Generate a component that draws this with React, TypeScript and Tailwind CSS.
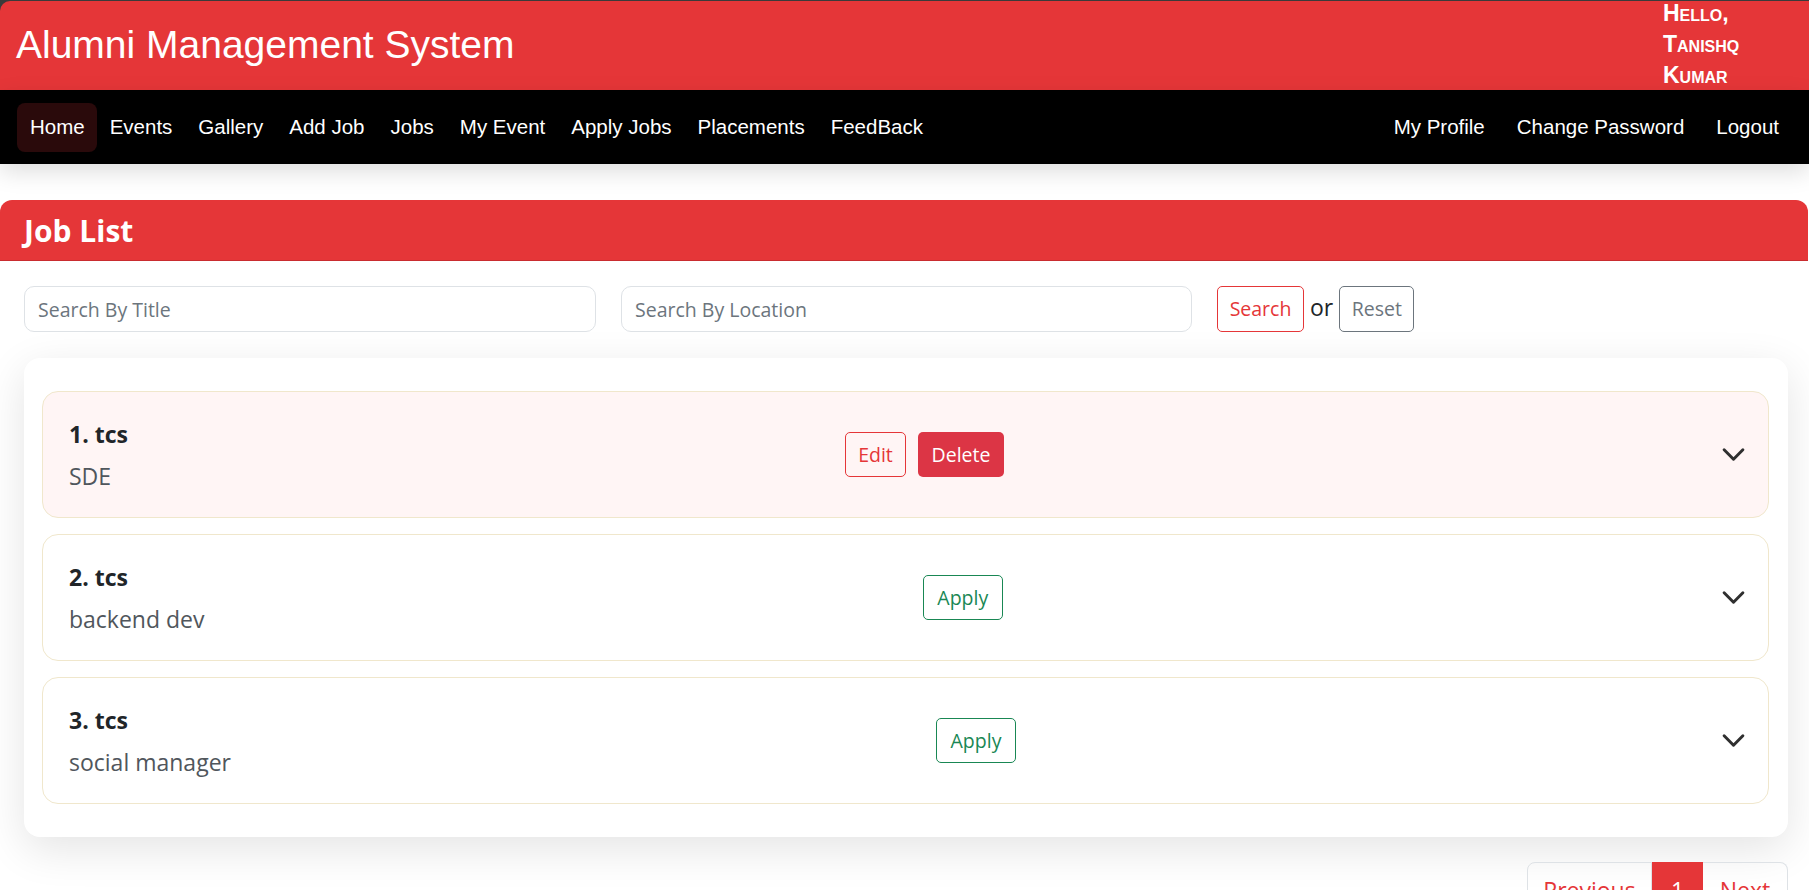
const jobs = [
  { id: 1, company: 'tcs', title: 'SDE', own: true },
  { id: 2, company: 'tcs', title: 'backend dev', own: false },
  { id: 3, company: 'tcs', title: 'social manager', own: false },
]

const leftLinks = ['Events', 'Gallery', 'Add Job', 'Jobs', 'My Event', 'Apply Jobs', 'Placements', 'FeedBack']
const rightLinks = ['My Profile', 'Change Password', 'Logout']

function Chevron() {
  return (
    <svg width="25" height="25" viewBox="0 0 16 16" fill="none" stroke="#2f2f2f" strokeWidth="1.9" strokeLinecap="round" strokeLinejoin="round">
      <path d="M2 5L8 11L14 5" />
    </svg>
  )
}

function JobItem({ job }: { job: (typeof jobs)[number] }) {
  return (
    <div
      className={`h-[127px] rounded-[16px] border border-[#f0e7cc] flex items-center justify-between pl-[26px] pr-[22px] ${
        job.own ? 'bg-[#fff5f5]' : 'bg-white'
      }`}
    >
      {/* Title + role */}
      <div className="flex flex-col mt-[3px]">
        <div className="text-[23px] leading-[30px] font-bold text-[#212529]">
          {job.id}. {job.company}
        </div>
        <div className="mt-[10px] text-[23px] leading-[34px] text-[#50565c]">{job.title}</div>
      </div>

      {/* Actions */}
      {job.own ? (
        <div className="flex items-center gap-[12px]">
          <button className="w-[61px] h-[45px] rounded-[5px] border border-[#e53638] text-[#e53638] text-[19.5px]">
            Edit
          </button>
          <button className="w-[86px] h-[45px] rounded-[5px] bg-[#dc3545] text-white text-[19.5px]">Delete</button>
        </div>
      ) : (
        <button className="w-[80px] h-[45px] rounded-[5px] border border-[#198754] text-[#198754] text-[19.5px]">
          Apply
        </button>
      )}

      <Chevron />
    </div>
  )
}

export default function App() {
  return (
    <div className="min-h-screen bg-white font-['Open_Sans',sans-serif]">
      {/* Top bar */}
      <div className="bg-[#3a3a3a] pt-[1px] font-['Liberation_Sans',Arial,sans-serif]">
        <header className="h-[89px] bg-[#e53638] rounded-tl-[10px] flex text-white">
          <h1 className="self-center pl-[16px] -mt-[3px] text-[39px] leading-none">Alumni Management System</h1>
          <div className="ml-auto mr-[8px] w-[138px] -mt-[3px] text-[23px] leading-[31px] font-bold [font-variant:small-caps]">
            Hello, Tanishq Kumar
          </div>
        </header>
      </div>

      <nav className="relative z-10 h-[74px] bg-black flex items-center pl-[17px] pr-[14px] text-white text-[20.5px] font-['Liberation_Sans',Arial,sans-serif] shadow-[0_8px_22px_rgba(0,0,0,0.13)]">
        <a className="h-[49px] flex items-center pl-[13px] pr-[12px] rounded-[8px] bg-[#2a0a0b]">Home</a>
        {leftLinks.map((l) => (
          <a key={l} className="px-[13px]">
            {l}
          </a>
        ))}
        <div className="ml-auto flex">
          {rightLinks.map((l) => (
            <a key={l} className="px-[16px]">
              {l}
            </a>
          ))}
        </div>
      </nav>

      {/* Job list card */}
      <section className="mt-[36px] mr-[1px]">
        <div className="h-[61px] rounded-t-[12px] bg-[#e53638] border-b border-[#c92c2f] flex items-center px-[24px]">
          <h2 className="text-white text-[30px] font-bold mt-[1px]">Job List</h2>
        </div>

        <div className="pl-[24px] pr-[20px] pt-[25px] pb-[40px]">
          {/* Search row */}
          <div className="flex items-center">
            <input
              placeholder="Search By Title"
              className="w-[572px] h-[46px] rounded-[10px] border border-[#dee2e6] pl-[13px] text-[19.5px] placeholder:text-[#6c757d] outline-none"
            />
            <input
              placeholder="Search By Location"
              className="ml-[25px] w-[571px] h-[46px] rounded-[10px] border border-[#dee2e6] pl-[13px] text-[19.5px] placeholder:text-[#6c757d] outline-none"
            />
            <button className="ml-[25px] w-[87px] h-[46px] rounded-[5px] border border-[#e53638] text-[#e53638] text-[19.5px]">
              Search
            </button>
            <span className="mx-[6px] text-[23px] text-[#212529] -mt-[4px]">or</span>
            <button className="w-[75px] h-[46px] rounded-[5px] border border-[#6c757d] text-[#6c757d] text-[19.5px]">
              Reset
            </button>
          </div>

          {/* List */}
          <div className="mt-[26px] rounded-[16px] bg-white shadow-[0_12px_44px_rgba(0,0,0,0.11)] pt-[33px] pb-[33px] pl-[18px] pr-[19px] flex flex-col gap-[16px]">
            {jobs.map((j) => (
              <JobItem key={j.id} job={j} />
            ))}
          </div>

          {/* Pagination */}
          <div className="mt-[25px] flex justify-end">
            <div className="flex text-[23px] leading-[36px]">
              <a className="w-[125px] text-center pt-[9px] pb-[12px] border border-[#dee2e6] rounded-l-[8px] text-[#e53638]">
                Previous
              </a>
              <a className="w-[51px] text-center pt-[9px] pb-[12px] bg-[#e53638] border border-[#e53638] text-white">1</a>
              <a className="w-[85px] text-center pt-[9px] pb-[12px] border border-l-0 border-[#dee2e6] rounded-r-[8px] text-[#e53638]">
                Next
              </a>
            </div>
          </div>
        </div>
      </section>
    </div>
  )
}
